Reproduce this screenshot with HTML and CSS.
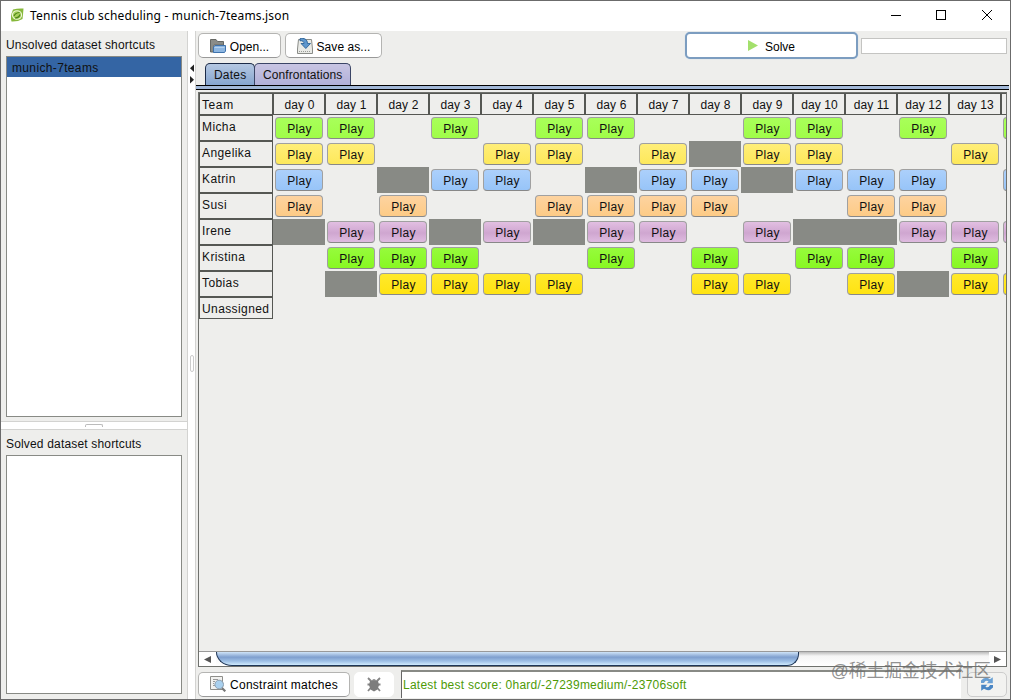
FILE: index.html
```html
<!DOCTYPE html>
<html lang="en">
<head>
  <meta charset="UTF-8">
  <title>Tennis club scheduling - munich-7teams.json</title>
  <link rel="stylesheet" href="styles.css">
</head>
<body>

  <div class="window">
    <header class="titlebar">
      <svg class="app-icon" width="14" height="14" viewBox="0 0 14 14">
        <path d="M3 1.500 Q8 0 13.500 0.500 Q13 7 12.500 11 Q8 13.800 1.500 13.500 Q0 8 3 1.500Z" fill="#86b83a"/>
        <ellipse cx="7" cy="7" rx="4.600" ry="4.300" fill="#a8d05a" stroke="#eef6d8" stroke-width="1.100"/>
        <path d="M4 8 Q5 5 9.500 4.500 M5 10 Q9 10 10 6.500" fill="none" stroke="#4c8418" stroke-width="1.200"/>
      </svg>
      <span class="title">Tennis club scheduling - munich-7teams.json</span>
      <svg class="controls" width="104" height="14" viewBox="0 0 104 14" fill="none" stroke="#000">
        <path d="M1 7.500 H11"/>
        <rect x="46.500" y="2.500" width="9" height="9"/>
        <path d="M92 2 L102 12 M102 2 L92 12"/>
      </svg>
    </header>

    <div class="main">
      <aside class="sidebar">
        <section class="shortcuts unsolved">
          <h2>Unsolved dataset shortcuts</h2>
          <ul class="list">
            <li class="selected">munich-7teams</li>
          </ul>
        </section>
        <div class="h-divider"><span class="grip"></span></div>
        <section class="shortcuts solved">
          <h2>Solved dataset shortcuts</h2>
          <ul class="list"></ul>
        </section>
      </aside>

      <div class="v-divider">
        <svg class="arrows" width="6" height="20" viewBox="0 0 6 20" fill="#222">
          <path d="M5 0.500 V8 L1 4.200Z"/>
          <path d="M1 12 V19.500 L5 15.700Z"/>
        </svg>
        <span class="grip"></span>
      </div>

      <div class="content">
        <div class="toolbar">
          <button class="btn open">
            <svg width="16" height="16" viewBox="0 0 16 16">
              <path d="M0.500 14 V1.500 H6 L7.500 3.500 H13.500 V7 H4 V14Z" fill="#8a8c88" stroke="#666864"/>
              <path d="M3.500 14.500 V9 L5 7.500 H15.500 V13 L14.500 14.500Z" fill="#8db6e0" stroke="#3f73ad"/>
              <path d="M4.500 9.500 H14.500" stroke="#b4d1ee"/>
            </svg>
            <span>Open...</span>
          </button>
          <button class="btn save">
            <svg width="16" height="16" viewBox="0 0 16 16">
              <path d="M1.500 1.500 H14.500 L15.500 11 V15.500 H0.500 V11Z" fill="#e9eae6" stroke="#8a8c88"/>
              <path d="M2 13.500 H14" stroke="#999b97" stroke-dasharray="1 1"/>
              <path d="M3 0.700 C7 -0.500 10.500 1.500 10.500 5.500 H13.500 L8.800 10.500 L4 5.500 H7 C7 3.500 5.500 2.500 3 2.800Z" fill="#5f97cd" stroke="#20588f" stroke-width=".8"/>
            </svg>
            <span>Save as...</span>
          </button>
          <button class="btn solve">
            <svg width="10" height="12" viewBox="0 0 10 12"><path d="M0 0 L10 5.500 L0 11Z" fill="#a3e06c"/></svg>
            <span>Solve</span>
          </button>
          <div class="progress"></div>
        </div>

        <nav class="tabs">
          <div class="tab active">Dates</div>
          <div class="tab">Confrontations</div>
        </nav>
        <div class="tab-strip"></div>

        <div class="scroll-pane">
          <div class="viewport">
            <div class="schedule" id="schedule"></div>
          </div>
          <div class="scrollbar">
            <svg class="scroll-btn" width="17" height="14" viewBox="0 0 17 14"><path d="M5 7.500 L12 4 V11Z" fill="#555"/></svg>
            <div class="track"><div class="thumb"></div></div>
            <svg class="scroll-btn" width="17" height="14" viewBox="0 0 17 14"><path d="M12 7.500 L5 4 V11Z" fill="#555"/></svg>
          </div>
        </div>

        <footer class="statusbar">
          <button class="btn constraint">
            <svg width="16" height="16" viewBox="0 0 16 16">
              <path d="M0.500 0.500 H12.500 V13.500 H0.500Z" fill="#f2f2f0" stroke="#8e8e8a"/>
              <path d="M3 3.500 H8 M3 5.500 H5 M3 7.500 H4 M3 9.500 H5" stroke="#999"/>
              <path d="M12 12 L15.300 15.300" stroke="#777" stroke-width="2.200"/>
              <circle cx="9.200" cy="8.500" r="4.300" fill="#a9d0ee" stroke="#8c9eae"/>
            </svg>
            <span>Constraint matches</span>
          </button>
          <button class="btn debug">
            <svg width="14" height="15" viewBox="0 0 14 15">
              <path d="M1 1 L4.500 4.500 M13 1 L9.500 4.500 M0.500 7.500 H13.500 M1 14 L4 10.500 M13 14 L10 10.500" stroke="#858585" stroke-width="1.800"/>
              <path d="M3 4 H11 L12 8 L10.500 12.500 L7 14.500 L3.500 12.500 L2 8Z" fill="#7d7d7d"/>
              <path d="M4.500 4 Q7 0 9.500 4Z" fill="#888"/>
            </svg>
          </button>
          <div class="score">Latest best score: 0hard/-27239medium/-23706soft</div>
          <button class="btn refresh">
            <svg width="14" height="14" viewBox="0 0 14 14">
              <path d="M1 6 V3.500 Q5 -1.200 10 2.300 L12.800 0.200 V6.300 H6.800 L8.600 4.300 Q5.500 2.500 4 6Z" fill="#6aa0d4"/>
              <path d="M13 8 V10.500 Q9 15.200 4 11.700 L1.200 13.800 V7.700 H7.200 L5.400 9.700 Q8.500 11.500 10 8Z" fill="#4a86c4"/>
            </svg>
          </button>
        </footer>
      </div>
    </div>

    <div class="watermark">@稀土掘金技术社区</div>
  </div>

  <script>
    const DAYS = 14;

    const teams = [
      { name: "Micha",    color: "lime",   play: [0, 1, 3, 5, 6, 9, 10, 12, 14],    off: [] },
      { name: "Angelika", color: "yellow", play: [0, 1, 4, 5, 7, 9, 10, 13],        off: [8] },
      { name: "Katrin",   color: "blue",   play: [0, 3, 4, 7, 8, 10, 11, 12, 14],   off: [2, 6, 9] },
      { name: "Susi",     color: "orange", play: [0, 2, 5, 6, 7, 8, 11, 12],        off: [] },
      { name: "Irene",    color: "plum",   play: [1, 2, 4, 6, 7, 9, 12, 13, 14],    off: [0, 3, 5, 10, 11] },
      { name: "Kristina", color: "green",  play: [1, 2, 3, 6, 8, 10, 11, 13],       off: [] },
      { name: "Tobias",   color: "gold",   play: [2, 3, 4, 5, 8, 9, 11, 13, 14],    off: [1, 12] },
      { name: "Unassigned", color: "",     play: [],                                off: [] }
    ];

    const schedule = document.getElementById("schedule");

    function addCell(className, text) {
      const cell = document.createElement("div");
      cell.className = className;
      cell.textContent = text || "";
      schedule.appendChild(cell);
      return cell;
    }

    // the column after the last full day only shows its left edge, so it has no labels
    addCell("head team", "Team");
    for (let d = 0; d <= DAYS; d++) {
      addCell("head", d < DAYS ? "day " + d : "");
    }

    for (const team of teams) {
      addCell("name", team.name);
      for (let d = 0; d <= DAYS; d++) {
        const cell = addCell(team.off.includes(d) ? "cell off" : "cell");
        if (team.play.includes(d)) {
          const btn = document.createElement("button");
          btn.className = "play " + team.color;
          btn.textContent = d < DAYS ? "Play" : "";
          cell.appendChild(btn);
        }
      }
    }
  </script>

</body>
</html>
```
FILE: styles.css
```css
* {
  box-sizing: border-box;
  margin: 0;
  padding: 0;
}

body {
  font-family: "Liberation Sans", Arial, sans-serif;
  font-size: 12px;
  color: #111;
  height: 700px;
  overflow: hidden;
}

.window {
  position: relative;
  width: 1011px;
  height: 700px;
  display: flex;
  flex-direction: column;
  background: #eeeeec;
  border: 1px solid #6b6b6b;
}

.titlebar {
  height: 30px;
  flex: none;
  display: flex;
  align-items: center;
  background: #fff;
  padding: 0 16px 2px 9px;
}

.title {
  font-family: "Noto Sans", sans-serif;
  font-size: 12px;
  letter-spacing: 0.16px;
  margin-left: 6px;
  color: #000;
}

.controls {
  margin-left: auto;
}

.main {
  flex: 1;
  display: flex;
  min-height: 0;
}

/* left side */
.sidebar {
  width: 186px;
  display: flex;
  flex-direction: column;
}

.shortcuts {
  display: flex;
  flex-direction: column;
  padding: 0 5px 5px;
}

.unsolved {
  height: 390px;
  padding-bottom: 4px;
}

.solved {
  flex: 1;
}

.shortcuts h2 {
  height: 25px;
  line-height: 28px;
  font-size: 12px;
  font-weight: normal;
  letter-spacing: 0.17px;
}

.list {
  flex: 1;
  list-style: none;
  background: #fff;
  border: 1px solid #888a85;
}

.list li {
  height: 20px;
  line-height: 22px;
  padding-left: 5px;
  letter-spacing: 0.35px;
}

.list .selected {
  background: #3465a4;
}

.h-divider {
  height: 9px;
  background: #fff;
  border-top: 1px solid #d3d3d1;
  border-bottom: 1px solid #d3d3d1;
  display: flex;
  justify-content: center;
  padding-top: 2px;
}

.h-divider .grip {
  width: 18px;
  height: 3px;
  border: 1px solid #bbb;
  border-bottom: none;
  border-radius: 2px 2px 0 0;
}

.v-divider {
  width: 9px;
  background: #fff;
  border-left: 1px solid #d3d3d1;
  border-right: 1px solid #d3d3d1;
  display: flex;
  flex-direction: column;
  align-items: center;
  padding-top: 33px;
}

.v-divider .grip {
  width: 4px;
  height: 17px;
  border: 1px solid #ccc;
  border-radius: 2px;
  margin-top: 271px;
}

/* right side */
.content {
  flex: 1;
  display: flex;
  flex-direction: column;
  min-width: 0;
}

.toolbar {
  height: 32px;
  display: flex;
  align-items: center;
  padding: 0 2px 2px;
}

.btn {
  display: flex;
  align-items: center;
  justify-content: center;
  gap: 4px;
  height: 25px;
  font: inherit;
  color: #000;
  background: #fff;
  border: 1px solid #b4b4b2;
  border-bottom-color: #999;
  border-radius: 5px;
  white-space: nowrap;
}

.btn span {
  padding-top: 2px;
}

.open {
  width: 83px;
}

.save {
  width: 97px;
  margin-left: 4px;
}

.open span {
  letter-spacing: 0;
}

.save span {
  letter-spacing: 0.05px;
}

.solve {
  width: 173px;
  height: 27px;
  margin-left: 303px;
  gap: 7px;
  border: 2px solid #7c9dc0;
  box-shadow: 0 0 1px #a9c8ea;
}

.progress {
  width: 146px;
  height: 16px;
  margin-left: 3px;
  background: #fff;
  border: 1px solid #c4c4c2;
}

.tabs {
  height: 22px;
  display: flex;
  padding-left: 9px;
}

.tab {
  height: 22px;
  line-height: 22px;
  padding: 0 8px;
  border: 1px solid #3b4566;
  border-bottom: none;
  border-radius: 5px 5px 0 0;
  background: linear-gradient(#c8c5e3, #b2b0d8);
  letter-spacing: 0.1px;
}

.tab.active {
  width: 50px;
  background: linear-gradient(#b5c8e2, #86a5cf);
  border-color: #1c2b47;
  letter-spacing: 0.2px;
  margin-right: -1px;
}

.tab-strip {
  width: 813px;
  height: 5px;
  background: #a2b8d8;
  border-top: 1px solid #000;
  border-bottom: 1px solid #000;
}

.scroll-pane {
  width: 809px;
  height: 576px;
  margin: 2px 0 0 2px;
  border: 1px solid #6f716d;
  display: flex;
  flex-direction: column;
}

.viewport {
  flex: 1;
  overflow: hidden;
}

.schedule {
  display: grid;
  grid-template-columns: 74px repeat(15, 52px);
  grid-template-rows: 22px repeat(7, 26px) 22px;
  width: 854px;
}

.head,
.name {
  border: 1px solid #555753;
}

.head {
  text-align: center;
  line-height: 22px;
  letter-spacing: 0.1px;
  padding-left: 1px;
}

.head.team {
  text-align: left;
  padding-left: 2px;
  letter-spacing: 0.6px;
}

.name {
  line-height: 22px;
  padding-left: 2px;
  letter-spacing: 0.4px;
}

.cell {
  padding: 2px;
}

.off {
  background: #888a85;
}

.play {
  display: block;
  width: 48px;
  height: 22px;
  font: inherit;
  letter-spacing: 0.3px;
  padding: 2px 0 0 1px;
  color: #111;
  border: 1px solid #a0a0a0;
  border-bottom-color: #888;
  border-radius: 4px;
}

.lime   { background: linear-gradient(#a8ff5a, #a0fd48); }
.yellow { background: linear-gradient(#ffee78, #fde85a); }
.blue   { background: linear-gradient(#acd0fb, #97c4f8); }
.orange { background: linear-gradient(#fdd3a0, #fdcb86); }
.plum   { background: linear-gradient(#e2bfe2, #cfa6d0 55%, #dfbbe0); }
.green  { background: linear-gradient(#96fb3c, #88f822); }
.gold   { background: linear-gradient(#ffe92c, #ffe312); }

.scrollbar {
  height: 15px;
  display: flex;
  background: #fff;
  border-top: 1px solid #999;
}

.scroll-btn {
  flex: none;
}

.track {
  flex: 1;
  background: linear-gradient(#bbb, #f5f5f5 4px, #fff);
}

.thumb {
  width: 583px;
  height: 14px;
  border: 1px solid #1d3557;
  border-top: none;
  border-radius: 0 0 12px 16px / 0 0 12px 14px;
  background: linear-gradient(#cfe4f8, #7f9fce 40%, #9dbfe5 70%, #cfeafc);
}

.statusbar {
  flex: 1;
  display: flex;
  align-items: center;
  padding: 3px 2px 1px;
}

.constraint {
  width: 152px;
  letter-spacing: 0.25px;
}

.debug {
  width: 40px;
  margin-left: 4px;
  border-color: #fff;
}

.score {
  width: 560px;
  height: 28px;
  line-height: 26px;
  margin-left: 7px;
  padding-left: 1px;
  letter-spacing: 0.24px;
  color: #4e9a06;
  background: #fff;
  border-top: 2px solid #888a85;
  border-left: 1px solid #666;
}

.refresh {
  width: 40px;
  margin-left: 6px;
  background: #f2f2f0;
  border-color: #ccc;
}

.watermark {
  position: absolute;
  right: 19px;
  bottom: 16px;
  font-family: "Liberation Sans", "Noto Sans CJK SC", sans-serif;
  font-size: 17.8px;
  line-height: 24px;
  color: rgba(110, 110, 110, 0.75);
}
```
